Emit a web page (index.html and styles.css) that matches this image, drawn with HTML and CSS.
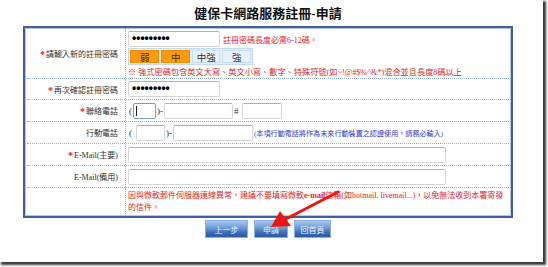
FILE: index.html
```html
<!DOCTYPE html>
<html lang="zh-Hant">
<head>
<meta charset="utf-8">
<title>健保卡網路服務註冊-申請</title>
<link rel="stylesheet" href="styles.css">
</head>
<body>
<div class="frame">
  <div class="wrap">
    <h1 class="title">健保卡網路服務註冊-申請</h1>
    <div class="form">
      <div class="row r1">
        <div class="label"><span class="req">*</span>請輸入新的註冊密碼</div>
        <div class="value v1">
          <div class="line"><span class="field pw">•••••••••</span><span class="red hint">註冊密碼長度必需6-12碼。</span></div>
          <div class="strength"><span class="s on w30">弱</span><span class="s on w29">中</span><span class="s w29">中強</span><span class="s w29">強</span></div>
          <div class="red note">※ 強式密碼包含英文大寫、英文小寫、數字、特殊符號(如~!@#$%^&amp;*)混合並且長度8碼以上</div>
        </div>
      </div>
      <div class="row r2">
        <div class="label"><span class="req">*</span>再次確認註冊密碼</div>
        <div class="value"><span class="field pw">•••••••••</span></div>
      </div>
      <div class="row">
        <div class="label"><span class="req">*</span>聯絡電話</div>
        <div class="value"><span class="sym">(</span><span class="field focus w23"><span class="caret"></span></span><span class="sym">)-</span><span class="field w69"></span><span class="sym hash">#</span><span class="field w40"></span></div>
      </div>
      <div class="row">
        <div class="label">行動電話</div>
        <div class="value"><span class="sym">(</span><span class="field w29 ml2"></span><span class="sym">)-</span><span class="field w79"></span><span class="blue">(本項行動電話將作為未來行動裝置之認證使用，請務必輸入)</span></div>
      </div>
      <div class="row">
        <div class="label"><span class="req">*</span>E-Mail(主要)</div>
        <div class="value"><span class="field w318"></span></div>
      </div>
      <div class="row">
        <div class="label">E-Mail(備用)</div>
        <div class="value"><span class="field w318"></span></div>
      </div>
      <div class="row r7">
        <div class="label"></div>
        <div class="value v7"><div class="red warn">因與微軟郵件伺服器連線異常，建議不要填寫微軟<b>e-mail</b>信箱(如hotmail, livemail...)，以免無法收到本署寄發<br>的信件。</div></div>
      </div>
    </div>
    <div class="buttons">
      <span class="btn b1">上一步</span>
      <span class="btn b2">申請</span>
      <span class="btn b3">回首頁</span>
    </div>
  </div>
</div>
<svg class="arrow" width="548" height="267" viewBox="0 0 548 267">
  <line x1="338" y1="192" x2="284" y2="220" stroke="#f4140f" stroke-width="3" stroke-linecap="round"/>
  <polygon points="271,227 280,211 291,226" fill="#f4140f"/>
</svg>
</body>
</html>
```
FILE: styles.css
```css
body {
  margin: 0;
  width: 548px;
  height: 267px;
  background: #fff;
  position: relative;
  overflow: hidden;
  font-family: "Liberation Serif", "Noto Sans CJK TC", serif;
}
.frame {
  width: 543px;
  height: 262px;
  background: #fff;
  box-shadow: 2px 2px 2px 1px #3a3a3a;
}
.wrap {
  margin-left: 23px;
  width: 490px;
}
.title {
  margin: 0;
  padding-top: 5px;
  height: 21px;
  line-height: 18px;
  text-align: center;
  font-family: "Liberation Serif", "Noto Sans CJK TC", serif;
  font-weight: bold;
  font-size: 13px;
  color: #111;
}
.form {
  box-sizing: border-box;
  width: 490px;
  height: 192px;
  border: 2px solid #3f5fa0;
  box-shadow: inset 0 0 0 1px #b7c8e6;
  padding: 0 2px;
}
.row {
  display: flex;
  height: 21px;
  border-bottom: 1px dotted #90b0ea;
}
.row.r1 { height: 50px; }
.row.r2 { height: 20px; }
.row.r7 { height: 28px; border-bottom: none; }
.label {
  box-sizing: border-box;
  width: 99px;
  flex: none;
  border-right: 1px dotted #90b0ea;
  display: flex;
  align-items: center;
  justify-content: flex-end;
  padding-right: 7px;
  font-size: 8px;
  color: #333;
  white-space: nowrap;
}
.req {
  color: #e82020;
  font-weight: bold;
  font-size: 10px;
  margin-right: 1px;
  position: relative;
  top: 1px;
}
.value {
  flex: 1;
  padding-left: 2px;
  display: flex;
  align-items: center;
  font-size: 8px;
  white-space: nowrap;
}
.value.v1 {
  flex-direction: column;
  align-items: flex-start;
  justify-content: flex-start;
  padding-top: 3px;
}
.value.v7 {
  align-items: flex-start;
  padding-top: 2px;
}
.line {
  display: flex;
  align-items: center;
}
.field {
  display: inline-block;
  box-sizing: border-box;
  height: 16px;
  border: 1px solid #d6d6d6;
  border-top-color: #b0b0b0;
  border-radius: 2px;
  background: #fff;
  flex: none;
}
.field.pw {
  width: 92px;
  padding-left: 3px;
  font-family: "Liberation Sans", sans-serif;
  font-size: 12px;
  font-weight: bold;
  line-height: 13px;
  color: #000;
}
.field.focus {
  border: 1px solid #7c9cc8;
  position: relative;
}
.caret {
  position: absolute;
  left: 2px;
  top: 2px;
  width: 1px;
  height: 10px;
  background: #222;
}
.w23 { width: 23px; }
.w29 { width: 29px; }
.w40 { width: 40px; }
.w69 { width: 69px; }
.w79 { width: 80px; }
.w318 { width: 318px; }
.ml2 { margin-left: 3px; }
.sym {
  color: #333;
  font-size: 9px;
  padding: 0 1px;
}
.sym.hash { padding: 0 3px 0 1px; }
.red { color: #e3262a; }
.hint { margin-left: 3px; }
.strength {
  box-sizing: border-box;
  margin-top: 1px;
  height: 17px;
  width: 125px;
  display: flex;
  gap: 2px;
  padding: 1px;
  border: 1px solid #c4daf4;
  background: #e2eefb;
}
.s {
  box-sizing: border-box;
  height: 13px;
  display: flex;
  align-items: center;
  justify-content: center;
  font-family: "Noto Sans CJK TC", sans-serif;
  font-size: 9.5px;
  color: #333;
  background: #e7f1fc;
  border: 1px solid #c9ddf3;
}
.s.on {
  background: #ff9a08;
  border-color: #f08c00;
  color: #3a2a00;
}
.s.w30 { width: 30px; }
.s.w29 { width: 29px; }
.note {
  margin-top: 1px;
  line-height: 13px;
  font-size: 8.2px;
}
.blue {
  color: #3038c8;
  margin-left: 1px;
  font-size: 7.1px;
}
.warn {
  line-height: 11.5px;
  font-size: 8px;
}
.warn b { font-weight: bold; }
.buttons {
  margin-top: 2px;
  display: flex;
  justify-content: center;
  gap: 6px;
}
.btn {
  box-sizing: border-box;
  height: 18px;
  display: flex;
  align-items: center;
  justify-content: center;
  font-family: "Noto Sans CJK TC", sans-serif;
  font-size: 8px;
  color: #e6eef9;
  background: linear-gradient(#a9c6ee, #6a98d6 45%, #3a69b4 75%, #2b5aa6);
  border: 1px solid #8fb0e0;
}
.b1 { width: 43px; }
.b2 { width: 34px; }
.b3 { width: 37px; }
.arrow {
  position: absolute;
  left: 0;
  top: 0;
  pointer-events: none;
}
```
